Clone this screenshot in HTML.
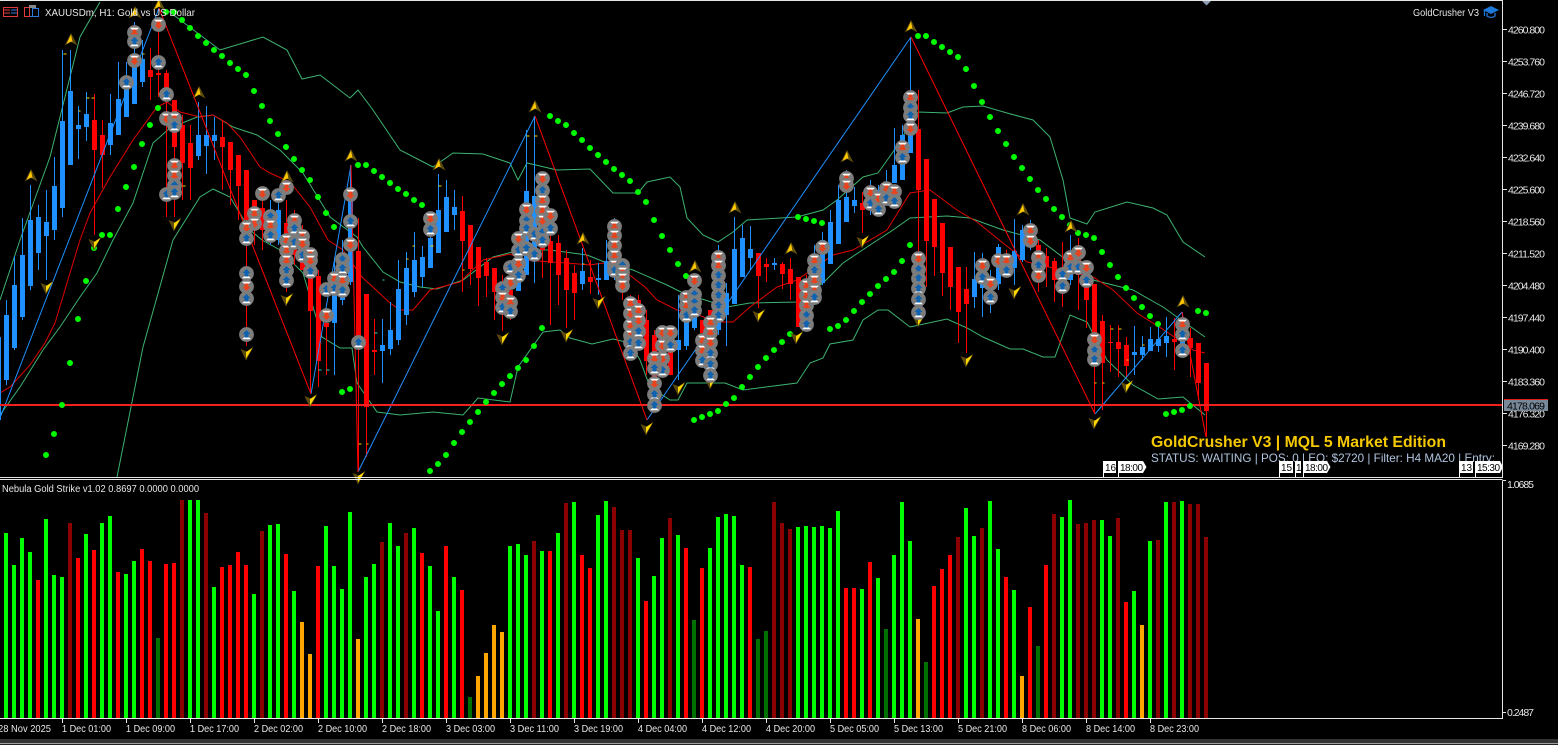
<!DOCTYPE html>
<html><head><meta charset="utf-8"><style>
html,body{margin:0;padding:0;background:#000;width:1558px;height:745px;overflow:hidden}
svg{display:block}
text{font-family:"Liberation Sans",sans-serif;fill:#e8e8e8;font-size:10.5px}
</style></head><body>
<svg width="1558" height="745" viewBox="0 0 1558 745" xmlns="http://www.w3.org/2000/svg">
<defs>
<g id="u"><circle r="7.4" fill="#7c7c7c"/><path d="M0-.5 4.500 3.500H-4.500Z" fill="#fff" transform="translate(0 1.200)"/><path d="M0-4.500 4 -.5H2V3H-2V-.5H-4Z" fill="#0f62b0"/></g>
<g id="d"><circle r="7.4" fill="#7c7c7c"/><path d="M0 .5 4.500-3.500H-4.500Z" fill="#fff" transform="translate(0 -1.200)"/><path d="M0 4.500 4 .5H2V-3H-2V.5H-4Z" fill="#e8431c"/></g>
<g id="a"><path d="M0-7-6.500 5.500 0 2 6.500 5.500Z" fill="#5e4c0e"/><path d="M0-5.500-4.500 4 0 1.500 1.500 2Z" fill="#ffc800"/></g>
<g id="b"><path d="M6.500-6.500-1 7.500-6.500-4 0-1.500Z" fill="#5e4c0e"/><path d="M5.500-5-1 5.500-1-1Z" fill="#ffd800"/></g>
</defs>
<rect width="1558" height="745" fill="#000"/>

<!-- bands -->
<g fill="none" stroke="#3cb371" stroke-width="1">
<path d="M0 300 20 240 50 157 80 37 100 2M167 10 220 50 263 37 287 50 302 79 320 75 350 98 358 90 373 110 400 150 433 167 453 153 483 154 510 163 518 180 527 163 557 170 590 169 613 193 638 193 647 182 670 177 680 187 687 218 703 235 718 242 733 232 747 220 797 217 823 210 837 200 863 177 878 173 893 152 918 112 947 113 963 107 983 106 1007 113 1033 120 1050 137 1063 180 1070 218 1087 224 1095 212 1127 202 1153 208 1167 215 1183 242 1205 257"/>
<path d="M0 415 20 387 43 350 60 327 80 297 97 273 113 240 133 203 153 143 170 128 197 117 213 115 233 127 257 135 280 150 303 173 330 217 357 237 363 247 383 272 400 282 420 287 437 289 463 280 493 257 520 250 550 250 587 255 607 263 633 270 667 285 683 293 727 307 750 303 797 302 823 283 843 263 867 247 893 230 910 218 947 216 970 218 1003 230 1040 240 1093 280 1133 290 1163 307 1205 337"/>
<path d="M117 477 143 347 173 240 200 197 213 189 230 197 250 230 262 240 280 250 303 273 322 337 340 348 352 348 357 383 377 412 400 415 433 412 463 415 478 398 510 402 518 367 543 332 560 330 570 338 592 344 613 339 630 343 640 360 650 387 670 400 678 400 687 383 725 383 743 390 797 383 810 363 823 358 830 344 853 340 863 320 878 310 888 310 910 327 947 319 967 328 983 337 1010 349 1023 349 1043 357 1055 357 1070 315 1087 322 1107 360 1133 385 1158 399 1183 397 1205 415"/>
</g>
<path fill="none" stroke="#e00000" d="M0 393 10 387 30 365 45 343 55 323 70 273 80 240 90 213 110 177 133 140 157 107 167 102 180 112 200 117 213 115 227 123 240 137 260 167 270 173 290 182 310 207 328 240 343 250 362 277 390 303 400 310 413 310 430 290 460 282 483 260 510 254 523 260 567 263 590 265 603 263 627 273 645 287 657 300 677 310 693 313 717 322 733 322 750 307 777 287 797 280 833 255 853 250 887 230 910 193 930 190 957 210 977 222 1003 243 1027 262 1093 277 1113 290 1137 313 1167 332 1193 350 1205 353"/>

<!-- candles -->
<g transform="translate(.5 0)" fill="none">
<path stroke="#1e90ff" d="M-2 337V421M6 300V385M14 256V350M22 218V320M30 185V290M38 205V270M46 190V280M54 157V240M62 50V217M70 50V165M78 106V159M86 92V141M110 94V155M118 62V135M126 62V117M134 22V104M142 40V87M198 102V160M206 106V174M214 117V160M270 200V245M278 200V245M334 258V375M342 240V305M350 165V285M382 319V383M390 302V355M398 260V345M406 252V325M414 232V297M422 246V287M430 215V268M438 174V253M446 180V232M454 190V230M518 240V291M526 130V275M534 116V283M582 248V290M598 263V295M606 240V280M614 218V280M678 295V380M686 310V350M694 290V330M718 245V335M726 283V346M734 217V304M742 225V277M750 226V270M774 258V270M814 245V305M822 232V285M830 210V264M838 185V244M846 170V222M854 187V213M870 180V215M878 185V210M886 170V205M894 128V183M902 125V180M910 37V153M974 252V308M982 253V317M990 270V313M998 244V290M1014 219V285M1022 225V262M1030 220V250M1070 235V285M1134 326V375M1142 336V360M1150 327V350M1158 323V352M1166 317V357M1182 312V350"/>
<path stroke="#1e90ff" stroke-width="5" d="M-2 337V420M6 315V380M14 285V348M22 255V317M30 220V286M38 217V253M46 222V236M54 186V230M62 121V208M70 91V165M78 125V129M86 114V127M110 123V145M118 99V135M126 80V117M134 66V104M142 59V82M198 135V156M206 135V146M214 135V141M270 210V240M278 210V240M334 280V323M342 260V300M350 200V282M382 345V351M390 330V349M398 289V340M406 268V315M414 260V292M422 257V277M430 238V268M438 210V253M446 197V232M454 207V215M518 273V291M526 191V275M534 196V260M582 271V284M598 278V280M606 261V280M614 235V270M678 340V350M686 320V346M694 300V328M718 257V330M726 293V315M734 249V304M742 238V277M750 249V258M774 263V265M814 255V300M822 240V283M830 222V264M838 200V244M846 197V222M854 200V206M870 195V210M878 190V205M886 190V200M894 165V183M902 135V180M910 97V153M974 279V297M982 267V288M990 280V295M998 247V284M1014 251V268M1022 230V260M1030 225V245M1070 255V280M1134 352V355M1142 347V355M1150 339V351M1158 339V346M1166 336V343M1182 320V345"/>
<path stroke="#f00" d="M94 94V235M102 120V188M150 48V100M158 20V97M166 70V217M174 100V217M182 115V200M190 125V200M222 120V190M230 142V205M238 155V220M246 170V346M254 200V245M262 195V250M286 200V292M294 210V265M302 225V270M310 262V393M318 270V387M326 310V375M358 218V470M366 294V457M374 319V375M462 196V292M470 225V285M478 247V306M486 258V297M494 268V320M502 275V331M510 270V320M542 175V278M550 235V325M558 235V305M566 250V328M574 265V320M590 260V294M622 262V300M630 295V360M638 295V345M646 310V375M654 330V410M662 330V372M670 330V375M702 320V350M710 310V370M758 253V308M766 258V282M782 262V289M790 258V300M798 277V327M806 275V330M862 192V233M918 90V258M918 258V320M926 159V287M934 199V276M942 223V296M950 247V310M958 267V343M966 267V353M1006 250V275M1038 240V292M1046 248V287M1054 258V302M1062 242V307M1078 238V310M1086 265V328M1094 284V413M1102 315V410M1110 325V372M1118 325V377M1126 337V378M1174 318V370M1190 328V377M1198 343V400M1206 363V437"/>
<path stroke="#f00" stroke-width="5" d="M94 120V150M102 135V155M150 70V77M158 73V75M166 73V94M174 100V147M182 125V163M190 143V168M222 137V147M230 142V170M238 155V186M246 170V220M254 200V217M262 208V230M286 223V240M294 225V255M302 240V270M310 276V311M318 276V361M326 323V327M358 251V347M366 294V407M374 350V352M462 211V241M470 225V269M478 247V278M486 262V276M494 268V292M502 283V300M510 290V305M542 190V250M550 241V263M558 243V275M566 258V290M574 273V293M590 277V282M622 270V290M630 298V345M638 300V340M646 320V361M654 335V400M662 340V370M670 337V375M702 320V333M710 310V360M758 253V276M766 264V267M782 264V274M790 269V284M798 277V327M806 280V320M862 203V210M918 129V190M926 159V241M934 199V247M942 223V273M950 247V287M958 267V312M966 289V304M1006 255V270M1038 245V275M1046 256V267M1054 261V280M1062 270V290M1078 255V275M1086 287V300M1094 284V335M1102 321V363M1110 342V343M1118 342V349M1126 345V366M1174 339V342M1190 338V348M1198 343V383M1206 363V411"/>
<path stroke="#ffd000" stroke-width="1" d="M63 54h3M78 111h2M86 98h3M94 98h-3M142 54h2M158 94h3M182 186h3M430 246h3M414 246h-2M406 259h2M438 186h3M462 270h2M526 136h3M534 136h3M582 264h2M1110 329h3M1118 329h3M1126 360h2M1142 345h2M1158 324h2M1094 383h2M1102 383h2M358 444h3M366 444h2"/>
<path stroke="#29d3c4" stroke-width="1" d="M342 268h2M382 280h2M374 333h3M318 370h3M326 370h3"/>
</g>

<!-- zigzag -->
<g fill="none">
<path stroke="#1e90ff" d="M0 418 159 8M311 394 351 165M358 472 535 116M647 420 911 37M1095 414 1182 312"/>
<path stroke="#f00" d="M159 8 311 394M351 165 358 472M535 116 647 420M911 37 1095 414M1182 312 1206 437"/>
</g>

<!-- price line -->
<rect x="0" y="404" width="1503" height="2" fill="#f42020"/>

<!-- SAR dots -->
<path fill="none" stroke="#0f0" stroke-width="6" stroke-linecap="round" d="M46 455h0M54 434h0M62 405h0M70 363h0M78 319h0M86 281h0M94 248h0M102 235h0M110 235h0M118 209h0M126 187h0M134 167h0M142 144h0M150 125h0M158 108h0M166 12h0M174 12h0M182 20h0M190 28h0M198 36h0M206 43h0M214 50h0M222 56h0M230 63h0M238 69h0M246 75h0M254 91h0M262 106h0M270 121h0M278 134h0M286 147h0M294 159h0M302 170h0M310 180h0M318 197h0M326 213h0M334 227h0M342 392h0M350 389h0M358 165h0M366 165h0M374 171h0M382 177h0M390 183h0M398 189h0M406 194h0M414 200h0M422 205h0M430 471h0M438 464h0M446 455h0M454 443h0M462 432h0M470 422h0M478 412h0M486 402h0M494 393h0M502 384h0M510 376h0M518 368h0M526 360h0M534 346h0M542 328h0M550 116h0M558 121h0M566 125h0M574 133h0M582 140h0M590 148h0M598 155h0M606 162h0M614 169h0M622 175h0M630 181h0M638 192h0M646 202h0M654 220h0M662 236h0M670 250h0M678 264h0M686 276h0M694 420h0M702 417h0M710 414h0M718 411h0M726 404h0M734 398h0M742 387h0M750 377h0M758 367h0M766 358h0M774 350h0M782 342h0M790 334h0M798 217h0M806 219h0M814 221h0M822 223h0M830 329h0M838 326h0M846 320h0M854 311h0M862 302h0M870 294h0M878 286h0M886 279h0M894 272h0M902 261h0M910 245h0M918 36h0M926 36h0M934 42h0M942 47h0M950 52h0M958 57h0M966 69h0M974 86h0M982 102h0M990 117h0M998 131h0M1006 144h0M1014 157h0M1022 168h0M1030 179h0M1038 190h0M1046 199h0M1054 209h0M1062 217h0M1070 225h0M1078 233h0M1086 235h0M1094 238h0M1102 252h0M1110 265h0M1118 277h0M1126 288h0M1134 298h0M1142 307h0M1150 316h0M1158 324h0M1166 414h0M1174 412h0M1182 410h0M1190 406h0M1198 311h0M1206 313h0"/>

<!-- gold darts -->
<g>
<use href="#a" x="31" y="176"/><use href="#a" x="71" y="40"/><use href="#a" x="135" y="13"/><use href="#a" x="159" y="5"/><use href="#a" x="199" y="93"/><use href="#a" x="287" y="177"/><use href="#a" x="351" y="156"/><use href="#a" x="439" y="165"/><use href="#a" x="535" y="107"/><use href="#a" x="583" y="239"/><use href="#a" x="695" y="267"/><use href="#a" x="735" y="208"/><use href="#a" x="791" y="249"/><use href="#a" x="911" y="27"/><use href="#a" x="847" y="157"/><use href="#a" x="1023" y="210"/><use href="#a" x="1071" y="227"/><use href="#a" x="1183" y="302"/>
<use href="#b" x="175" y="224"/><use href="#b" x="47" y="287"/><use href="#b" x="95" y="243"/><use href="#b" x="247" y="353"/><use href="#b" x="287" y="299"/><use href="#b" x="311" y="400"/><use href="#b" x="359" y="477"/><use href="#b" x="503" y="338"/><use href="#b" x="567" y="335"/><use href="#b" x="599" y="302"/><use href="#b" x="647" y="428"/><use href="#b" x="679" y="388"/><use href="#b" x="759" y="315"/><use href="#b" x="797" y="337"/><use href="#b" x="711" y="382"/><use href="#b" x="863" y="241"/><use href="#b" x="919" y="320"/><use href="#b" x="967" y="360"/><use href="#b" x="1015" y="292"/><use href="#b" x="1127" y="386"/><use href="#b" x="1095" y="422"/>
</g>

<!-- markers -->
<g transform="translate(.5 .5)">
<use href="#d" x="134" y="32"/><use href="#u" x="134" y="41"/><use href="#d" x="158" y="24"/><use href="#d" x="134" y="60"/><use href="#u" x="158" y="62"/><use href="#u" x="126" y="82"/><use href="#u" x="166" y="94"/><use href="#d" x="166" y="118"/><use href="#d" x="174" y="118"/><use href="#u" x="174" y="125"/><use href="#d" x="174" y="165"/><use href="#d" x="174" y="175"/><use href="#u" x="174" y="185"/><use href="#u" x="166" y="194"/><use href="#u" x="174" y="192"/>
<use href="#d" x="262" y="193"/><use href="#u" x="278" y="195"/><use href="#d" x="286" y="187"/><use href="#d" x="254" y="213"/><use href="#d" x="254" y="223"/><use href="#d" x="246" y="227"/><use href="#u" x="246" y="238"/><use href="#u" x="270" y="216"/><use href="#d" x="270" y="225"/><use href="#u" x="270" y="235"/><use href="#d" x="294" y="220"/><use href="#u" x="294" y="228"/><use href="#d" x="302" y="236"/>
<use href="#u" x="246" y="273"/><use href="#d" x="246" y="286"/><use href="#u" x="246" y="298"/><use href="#u" x="246" y="334"/>
<use href="#d" x="286" y="240"/><use href="#d" x="286" y="250"/><use href="#d" x="286" y="260"/><use href="#u" x="286" y="270"/><use href="#u" x="286" y="280"/><use href="#u" x="294" y="242"/><use href="#d" x="302" y="243"/><use href="#u" x="302" y="255"/><use href="#d" x="310" y="254"/><use href="#d" x="310" y="260"/><use href="#u" x="310" y="271"/>
<use href="#d" x="350" y="194"/><use href="#u" x="350" y="221"/><use href="#d" x="350" y="244"/><use href="#u" x="342" y="259"/><use href="#u" x="342" y="268"/><use href="#d" x="334" y="278"/><use href="#u" x="326" y="289"/><use href="#d" x="342" y="280"/><use href="#u" x="334" y="288"/><use href="#u" x="342" y="290"/><use href="#d" x="326" y="315"/><use href="#u" x="358" y="342"/>
<use href="#d" x="430" y="218"/><use href="#u" x="430" y="229"/>
<use href="#d" x="526" y="209"/><use href="#u" x="526" y="220"/><use href="#u" x="526" y="228"/>
<use href="#d" x="542" y="178"/><use href="#u" x="542" y="190"/><use href="#d" x="542" y="200"/><use href="#d" x="542" y="210"/><use href="#d" x="542" y="220"/><use href="#u" x="534" y="234"/><use href="#u" x="542" y="232"/><use href="#u" x="542" y="240"/><use href="#d" x="550" y="215"/><use href="#u" x="550" y="228"/>
<use href="#d" x="518" y="238"/><use href="#u" x="518" y="250"/><use href="#u" x="526" y="248"/><use href="#u" x="534" y="254"/>
<use href="#u" x="510" y="267"/><use href="#d" x="518" y="263"/><use href="#u" x="518" y="275"/><use href="#d" x="510" y="282"/><use href="#u" x="502" y="288"/><use href="#d" x="502" y="297"/><use href="#u" x="502" y="307"/><use href="#d" x="510" y="302"/><use href="#u" x="510" y="311"/>
<use href="#d" x="614" y="226"/><use href="#d" x="614" y="235"/><use href="#d" x="614" y="245"/><use href="#d" x="614" y="255"/><use href="#d" x="614" y="265"/><use href="#u" x="614" y="270"/><use href="#u" x="622" y="265"/><use href="#d" x="622" y="272"/><use href="#d" x="622" y="278"/><use href="#d" x="622" y="285"/>
<use href="#d" x="630" y="303"/><use href="#d" x="630" y="313"/><use href="#d" x="630" y="325"/><use href="#d" x="630" y="335"/><use href="#u" x="630" y="342"/><use href="#u" x="630" y="353"/><use href="#d" x="638" y="310"/><use href="#d" x="638" y="320"/><use href="#u" x="638" y="331"/><use href="#u" x="638" y="343"/>
<use href="#d" x="662" y="332"/><use href="#d" x="662" y="345"/><use href="#d" x="662" y="358"/><use href="#u" x="662" y="370"/><use href="#d" x="670" y="332"/><use href="#u" x="670" y="345"/>
<use href="#d" x="654" y="358"/><use href="#u" x="654" y="368"/><use href="#d" x="654" y="383"/><use href="#u" x="654" y="394"/><use href="#u" x="654" y="405"/>
<use href="#d" x="686" y="297"/><use href="#d" x="686" y="305"/><use href="#u" x="686" y="315"/><use href="#d" x="694" y="280"/><use href="#u" x="694" y="294"/><use href="#u" x="694" y="302"/><use href="#u" x="694" y="310"/>
<use href="#d" x="718" y="257"/><use href="#d" x="718" y="265"/><use href="#u" x="718" y="275"/><use href="#u" x="718" y="285"/><use href="#u" x="718" y="295"/><use href="#u" x="718" y="305"/><use href="#u" x="718" y="315"/>
<use href="#d" x="702" y="340"/><use href="#d" x="702" y="350"/><use href="#u" x="702" y="360"/><use href="#d" x="710" y="322"/><use href="#d" x="710" y="332"/><use href="#d" x="710" y="342"/><use href="#u" x="710" y="353"/><use href="#u" x="710" y="364"/><use href="#u" x="710" y="375"/>
<use href="#d" x="806" y="285"/><use href="#d" x="806" y="295"/><use href="#d" x="806" y="305"/><use href="#u" x="806" y="315"/><use href="#u" x="806" y="324"/>
<use href="#d" x="814" y="260"/><use href="#u" x="814" y="270"/><use href="#d" x="814" y="280"/><use href="#d" x="814" y="290"/><use href="#u" x="814" y="297"/><use href="#d" x="822" y="247"/>
<use href="#d" x="846" y="178"/><use href="#d" x="846" y="185"/>
<use href="#d" x="870" y="192"/><use href="#u" x="870" y="203"/><use href="#d" x="878" y="198"/><use href="#u" x="878" y="209"/><use href="#d" x="886" y="188"/><use href="#u" x="886" y="198"/><use href="#d" x="894" y="191"/><use href="#u" x="894" y="201"/>
<use href="#d" x="902" y="147"/><use href="#u" x="902" y="157"/>
<use href="#d" x="910" y="97"/><use href="#u" x="910" y="107"/><use href="#u" x="910" y="115"/><use href="#d" x="910" y="128"/>
<use href="#d" x="918" y="258"/><use href="#u" x="918" y="269"/><use href="#u" x="918" y="278"/><use href="#u" x="918" y="288"/><use href="#u" x="918" y="299"/><use href="#u" x="918" y="312"/>
<use href="#d" x="982" y="265"/><use href="#u" x="982" y="277"/><use href="#d" x="990" y="283"/><use href="#u" x="990" y="297"/>
<use href="#d" x="998" y="260"/><use href="#d" x="1006" y="260"/><use href="#u" x="1006" y="270"/>
<use href="#d" x="1030" y="230"/><use href="#d" x="1030" y="240"/><use href="#d" x="1038" y="257"/><use href="#u" x="1038" y="265"/><use href="#d" x="1038" y="275"/>
<use href="#u" x="1062" y="274"/><use href="#u" x="1062" y="286"/><use href="#d" x="1070" y="257"/><use href="#u" x="1070" y="267"/><use href="#d" x="1078" y="252"/><use href="#u" x="1078" y="267"/><use href="#d" x="1086" y="267"/><use href="#u" x="1086" y="280"/>
<use href="#d" x="1094" y="339"/><use href="#u" x="1094" y="350"/><use href="#u" x="1094" y="359"/>
<use href="#d" x="1182" y="324"/><use href="#u" x="1182" y="334"/><use href="#u" x="1182" y="350"/>
</g>

<!-- top left -->
<g fill="none">
<rect x="3.500" y="7.500" width="14" height="9" stroke="#e03a3a"/><path stroke="#e03a3a" d="M4 10H10M4 13H10"/><path stroke="#2a78d8" d="M11 10H17M11 13H17"/>
<path stroke="#e03a3a" d="M24.500 7.500H29.500V16.500H24.500Z"/><path stroke="#2a78d8" d="M32.500 8.500H38.500V16.500H32.500ZM30 16.500H34"/><rect x="29" y="5" width="7" height="3" fill="#888"/>
</g>
<text x="45" y="16" textLength="150" lengthAdjust="spacingAndGlyphs">XAUUSDm, H1:  Gold vs US Dollar</text>
<text x="1413" y="16" textLength="66" lengthAdjust="spacingAndGlyphs">GoldCrusher V3</text>
<path fill="#1e78d8" d="M1491 6 1499 10 1491 14 1483 10Z"/><path fill="none" stroke="#1e78d8" stroke-width="1.300" d="M1487 13V16Q1491 19 1495 16V13M1484.500 10V16"/>
<path d="M1201 0H1212L1206.500 5.500Z" fill="#8c9db5"/>

<!-- overlay text -->
<text x="1151" y="447" textLength="295" lengthAdjust="spacingAndGlyphs" style="font-size:16px;font-weight:bold;fill:#f5c800">GoldCrusher V3 | MQL 5 Market Edition</text>
<text x="1151" y="462" textLength="344" lengthAdjust="spacingAndGlyphs" style="font-size:12px;fill:#b0c4de">STATUS: WAITING | POS: 0 | EQ: $2720 | Filter: H4 MA20 | Entry:</text>

<!-- time tags -->
<g fill="#fff">
<path d="M1103 461H1116V473H1104V477H1103ZM1118 461H1143L1146.500 467 1143 473H1119V477H1118Z"/>
<path d="M1279 461H1293V473H1280V477H1279ZM1295 461H1301V473H1296V477H1295ZM1303 461H1327L1330.500 467 1327 473H1304V477H1303Z"/>
<path d="M1459 461H1473V473H1460V477H1459ZM1475 461H1500L1503 467 1500 473H1476V477H1475Z"/>
</g>
<g>
<text x="1105" y="471" style="fill:#000;font-size:10px">16:</text><text x="1120" y="471" style="fill:#000;font-size:10px" textLength="23">18:00</text>
<text x="1281" y="471" style="fill:#000;font-size:10px">15:</text><text x="1296" y="471" style="fill:#000;font-size:10px">1</text><text x="1305" y="471" style="fill:#000;font-size:10px" textLength="23">18:00</text>
<text x="1461" y="471" style="fill:#000;font-size:10px">13:</text><text x="1477" y="471" style="fill:#000;font-size:10px" textLength="23">15:30</text>
</g>

<!-- frames -->
<g fill="none" stroke="#e6e6e6">
<path d="M0 .5H1502.500V477.500H0M1502.500 480.500V718.500H0M0 479.500H1502.500M1502.500 480.500H1506M1502.500 712.500H1506"/>
<path d="M1503 29.500h4M1503 61.500h4M1503 93.500h4M1503 125.500h4M1503 157.500h4M1503 189.500h4M1503 221.500h4M1503 253.500h4M1503 285.500h4M1503 317.500h4M1503 349.500h4M1503 381.500h4M1503 413.500h4M1503 445.500h4"/>
<path d="M62.500 718V723M126.500 718V723M190.500 718V723M254.500 718V723M318.500 718V723M382.500 718V723M446.500 718V723M510.500 718V723M574.500 718V723M638.500 718V723M702.500 718V723M766.500 718V723M830.500 718V723M894.500 718V723M958.500 718V723M1022.500 718V723M1086.500 718V723M1150.500 718V723"/>
</g>

<!-- price axis -->
<g>
<text x="1508" y="33.500" textLength="37">4260.800</text><text x="1508" y="65.500" textLength="37">4253.760</text><text x="1508" y="97.500" textLength="37">4246.720</text><text x="1508" y="129.500" textLength="37">4239.680</text><text x="1508" y="161.500" textLength="37">4232.640</text><text x="1508" y="193.500" textLength="37">4225.600</text><text x="1508" y="225.500" textLength="37">4218.560</text><text x="1508" y="257.500" textLength="37">4211.520</text><text x="1508" y="289.500" textLength="37">4204.480</text><text x="1508" y="321.500" textLength="37">4197.440</text><text x="1508" y="353.500" textLength="37">4190.400</text><text x="1508" y="385.500" textLength="37">4183.360</text><text x="1508" y="417.500" textLength="37">4176.320</text><text x="1508" y="449.500" textLength="37">4169.280</text>
</g>
<rect x="1504" y="400" width="44" height="11" fill="#778899"/><rect x="1504" y="399" width="44" height="1" fill="#e02020"/>
<text x="1507" y="409.500" textLength="38" style="fill:#000">4178.069</text>

<!-- histogram -->
<text x="2" y="492" textLength="197" lengthAdjust="spacingAndGlyphs" style="font-size:10px">Nebula Gold Strike v1.02 0.8697 0.0000 0.0000</text>
<text x="1507" y="488" textLength="27">1.0685</text>
<text x="1507" y="716" textLength="27">0.2487</text>
<g fill="none" stroke-width="4">
<path stroke="#0f0" d="M6 533V718M14 565V718M22 538V718M30 552V718M46 519V718M54 575V718M62 577V718M86 534V718M102 523V718M110 516V718M126 574V718M134 561V718M190 500V718M198 500V718M214 587V718M254 594V718M270 525V718M278 524V718M294 591V718M326 526V718M334 566V718M342 589V718M350 512V718M366 577V718M374 564V718M390 523V718M398 546V718M414 528V718M430 566V718M438 611V718M454 577V718M510 546V718M518 544V718M526 555V718M542 551V718M558 533V718M574 502V718M598 515V718M606 501V718M638 558V718M654 576V718M662 538V718M678 535V718M710 548V718M718 517V718M726 514V718M734 516V718M742 565V718M798 527V718M806 526V718M814 527V718M822 526V718M830 528V718M838 511V718M862 589V718M878 578V718M894 555V718M902 502V718M910 541V718M966 508V718M974 536V718M990 501V718M998 549V718M1014 590V718M1062 517V718M1070 500V718M1102 520V718M1110 536V718M1134 591V718M1150 541V718M1166 502V718M1182 501V718"/>
<path stroke="#f00" d="M38 580V718M78 558V718M94 550V718M118 572V718M142 549V718M150 561V718M166 564V718M174 563V718M222 567V718M230 565V718M238 552V718M246 565V718M286 554V718M318 566V718M422 553V718M446 546V718M462 590V718M550 551V718M582 555V718M590 568V718M646 601V718M686 548V718M702 568V718M750 567V718M846 588V718M854 588V718M870 562V718M934 586V718M942 569V718M950 555V718M1006 577V718M1030 607V718M1046 565V718M1126 602V718"/>
<path stroke="#8b0000" d="M70 523V718M182 500V718M206 513V718M262 531V718M382 542V718M406 533V718M534 541V718M566 503V718M614 507V718M622 530V718M630 530V718M670 518V718M774 502V718M782 523V718M790 529V718M958 537V718M982 528V718M1054 514V718M1078 524V718M1086 523V718M1094 520V718M1118 518V718M1158 540V718M1174 502V718M1190 504V718M1198 504V718M1206 537V718"/>
<path stroke="#007000" d="M158 638V718M470 697V718M694 620V718M758 639V718M766 631V718M886 629V718M926 662V718M1038 646V718"/>
<path stroke="#ffa500" d="M302 622V718M310 654V718M358 639V718M478 676V718M486 653V718M494 625V718M502 632V718M918 619V718M1022 676V718M1142 625V718"/>
</g>

<!-- time axis -->
<g>
<text x="-2" y="732" textLength="53" lengthAdjust="spacingAndGlyphs">28 Nov 2025</text>
<text x="62" y="732" textLength="49" lengthAdjust="spacingAndGlyphs">1 Dec 01:00</text>
<text x="126" y="732" textLength="49" lengthAdjust="spacingAndGlyphs">1 Dec 09:00</text>
<text x="190" y="732" textLength="49" lengthAdjust="spacingAndGlyphs">1 Dec 17:00</text>
<text x="254" y="732" textLength="49" lengthAdjust="spacingAndGlyphs">2 Dec 02:00</text>
<text x="318" y="732" textLength="49" lengthAdjust="spacingAndGlyphs">2 Dec 10:00</text>
<text x="382" y="732" textLength="49" lengthAdjust="spacingAndGlyphs">2 Dec 18:00</text>
<text x="446" y="732" textLength="49" lengthAdjust="spacingAndGlyphs">3 Dec 03:00</text>
<text x="510" y="732" textLength="49" lengthAdjust="spacingAndGlyphs">3 Dec 11:00</text>
<text x="574" y="732" textLength="49" lengthAdjust="spacingAndGlyphs">3 Dec 19:00</text>
<text x="638" y="732" textLength="49" lengthAdjust="spacingAndGlyphs">4 Dec 04:00</text>
<text x="702" y="732" textLength="49" lengthAdjust="spacingAndGlyphs">4 Dec 12:00</text>
<text x="766" y="732" textLength="49" lengthAdjust="spacingAndGlyphs">4 Dec 20:00</text>
<text x="830" y="732" textLength="49" lengthAdjust="spacingAndGlyphs">5 Dec 05:00</text>
<text x="894" y="732" textLength="49" lengthAdjust="spacingAndGlyphs">5 Dec 13:00</text>
<text x="958" y="732" textLength="49" lengthAdjust="spacingAndGlyphs">5 Dec 21:00</text>
<text x="1022" y="732" textLength="49" lengthAdjust="spacingAndGlyphs">8 Dec 06:00</text>
<text x="1086" y="732" textLength="49" lengthAdjust="spacingAndGlyphs">8 Dec 14:00</text>
<text x="1150" y="732" textLength="49" lengthAdjust="spacingAndGlyphs">8 Dec 23:00</text>
</g>

<!-- bottom strip -->
<rect x="0" y="739" width="1558" height="4" fill="#333"/>
<rect x="0" y="743" width="1558" height="1" fill="#a0a0a0"/>
<rect x="0" y="744" width="1558" height="1" fill="#222"/>
</svg>
</body></html>
